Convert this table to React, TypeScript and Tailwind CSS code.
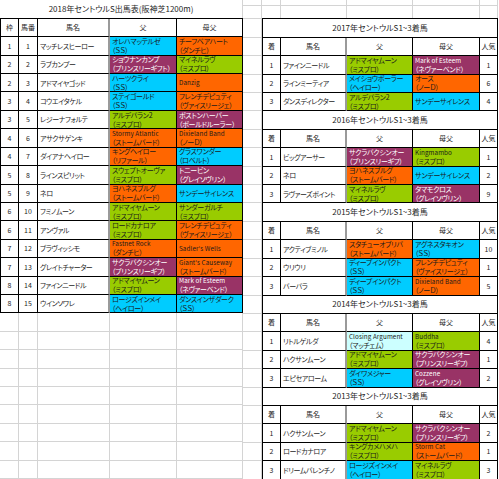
import React from "react";

type P = [string, string, string];

const COL: Record<string, string> = {
  c: "bg-[#00ccff] text-[#1a1a1a]",
  p: "bg-[#993366] text-white",
  g: "bg-[#99cc00] text-[#1a1a1a]",
  o: "bg-[#ff6600] text-[#1a1a1a]",
  l: "bg-[#ccffff] text-[#1a1a1a]",
};

const LEFT: [string, string, string, P, P][] = [
  ["1", "1", "マッチレスヒーロー", ["オレハマッテルゼ", "（ＳＳ）", "c"], ["チーフベアハート", "（ダンチヒ）", "o"]],
  ["2", "2", "ラブカンプー", ["ショウナンカンプ", "（プリンスリーギフト）", "p"], ["マイネルラヴ", "（ミスプロ）", "g"]],
  ["2", "3", "アドマイヤゴッド", ["ハーツクライ", "（ＳＳ）", "c"], ["Danzig", "", "o"]],
  ["3", "4", "コウエイタケル", ["ステイゴールド", "（ＳＳ）", "c"], ["フレンチデピュティ", "（ヴァイスリージェ）", "o"]],
  ["3", "5", "レジーナフォルテ", ["アルデバラン2", "（ミスプロ）", "g"], ["ボストンハーバー", "（ボールドルーラー）", "p"]],
  ["4", "6", "アサクサゲンキ", ["Stormy Atlantic", "（ストームバード）", "o"], ["Dixieland Band", "（ノーＤ）", "o"]],
  ["4", "7", "ダイアナヘイロー", ["キングヘイロー", "（リファール）", "o"], ["グラスワンダー", "（ロベルト）", "c"]],
  ["5", "8", "ラインスピリット", ["スウェプトオーヴァ", "（ミスプロ）", "g"], ["トニービン", "（グレイソヴリン）", "p"]],
  ["5", "9", "ネロ", ["ヨハネスブルグ", "（ストームバード）", "o"], ["サンデーサイレンス", "", "c"]],
  ["6", "10", "フミノムーン", ["アドマイヤムーン", "（ミスプロ）", "g"], ["サンダーガルチ", "（ミスプロ）", "g"]],
  ["6", "11", "アンヴァル", ["ロードカナロア", "（ミスプロ）", "g"], ["フレンチデピュティ", "（ヴァイスリージェ）", "o"]],
  ["7", "12", "ブラヴィッシモ", ["Fastnet Rock", "（ダンチヒ）", "o"], ["Sadler's Wells", "", "o"]],
  ["7", "13", "グレイトチャーター", ["サクラバクシンオー", "（プリンスリーギフ）", "p"], ["Giant's Causeway", "（ストームバード）", "o"]],
  ["8", "14", "ファインニードル", ["アドマイヤムーン", "（ミスプロ）", "g"], ["Mark of Esteem", "（ネヴァーベンド）", "p"]],
  ["8", "15", "ウインソワレ", ["ロージズインメイ", "（ヘイロー）", "c"], ["ダンスインザダーク", "（ＳＳ）", "c"]],
];

type RRow = [string, string, P, P, string];
const RIGHT: [string, RRow[]][] = [
  ["2017年セントウルS1~3着馬", [
    ["1", "ファインニードル", ["アドマイヤムーン", "（ミスプロ）", "g"], ["Mark of Esteem", "（ネヴァーベンド）", "p"], "1"],
    ["2", "ラインミーティア", ["メイショウボーラー", "（ヘイロー）", "c"], ["オース", "（ノーＤ）", "o"], "6"],
    ["3", "ダンスディレクター", ["アルデバラン2", "（ミスプロ）", "g"], ["サンデーサイレンス", "", "c"], "4"],
  ]],
  ["2016年セントウルS1~3着馬", [
    ["1", "ビッグアーサー", ["サクラバクシンオー", "（プリンスリーギフ）", "p"], ["Kingmambo", "（ミスプロ）", "g"], "1"],
    ["2", "ネロ", ["ヨハネスブルグ", "（ストームバード）", "o"], ["サンデーサイレンス", "", "c"], "2"],
    ["3", "ラヴァーズポイント", ["マイネルラヴ", "（ミスプロ）", "g"], ["タマモクロス", "（グレイソヴリン）", "p"], "9"],
  ]],
  ["2015年セントウルS1~3着馬", [
    ["1", "アクティブミノル", ["スタチューオブリバ", "（ストームバード）", "o"], ["アグネスタキオン", "（ＳＳ）", "c"], "10"],
    ["2", "ウリウリ", ["ディープインパクト", "（ＳＳ）", "c"], ["フレンチデピュティ", "（ヴァイスリージェ）", "o"], "1"],
    ["3", "バーバラ", ["ディープインパクト", "（ＳＳ）", "c"], ["Dixieland Band", "（ノーＤ）", "o"], "5"],
  ]],
  ["2014年セントウルS1~3着馬", [
    ["1", "リトルゲルダ", ["Closing Argument", "（マッチェム）", "l"], ["Buddha", "（ミスプロ）", "g"], "4"],
    ["2", "ハクサンムーン", ["アドマイヤムーン", "（ミスプロ）", "g"], ["サクラバクシンオー", "（プリンスリーギフ）", "p"], "1"],
    ["3", "エピセアローム", ["ダイワメジャー", "（ＳＳ）", "c"], ["Cozzene", "（グレイソヴリン）", "p"], "2"],
  ]],
  ["2013年セントウルS1~3着馬", [
    ["1", "ハクサンムーン", ["アドマイヤムーン", "（ミスプロ）", "g"], ["サクラバクシンオー", "（プリンスリーギフ）", "p"], "2"],
    ["2", "ロードカナロア", ["キングカメハメハ", "（ミスプロ）", "g"], ["Storm Cat", "（ストームバード）", "o"], "1"],
    ["3", "ドリームバレンチノ", ["ロージズインメイ", "（ヘイロー）", "c"], ["マイネルラヴ", "（ミスプロ）", "g"], "3"],
  ]],
];

function Ped({ v }: { v: P }) {
  const [n, s, k] = v;
  const latin = /^[A-Za-z]/.test(n);
  return (
    <div
      className={`h-[18.42px] border-r border-b border-black overflow-hidden whitespace-nowrap pl-[2px] flex flex-col justify-center leading-[9px] ${COL[k]}`}
    >
      <span className={latin ? "text-[6.3px] tracking-[0.1px]" : "text-[7px] tracking-[-0.3px]"}>{n}</span>
      {s && <span className="text-[7px] tracking-[-0.3px]">{s}</span>}
    </div>
  );
}

function Cell({ children, className = "" }: { children?: React.ReactNode; className?: string }) {
  return (
    <div
      className={`h-[18.42px] border-r border-b border-black overflow-hidden whitespace-nowrap flex items-center text-[7px] ${className}`}
    >
      {children}
    </div>
  );
}

export default function App() {
  return (
    <div className="w-[499px] h-[479px] overflow-hidden bg-white flex text-[#262626] font-['Noto_Sans_CJK_JP','Noto_Sans',sans-serif] [font-feature-settings:'palt']">
      {/* left sheet */}
      <div className="w-[243px] shrink-0 flex flex-col">
        <div className="h-[18.42px] border-r border-[#d4d4d4] flex items-center justify-center text-[8px]">
          2018年セントウルS出馬表(阪神芝1200m)
        </div>
        <div className="border-l border-t border-black">
          <div className="grid grid-cols-[18px_19px_72px_67px_66px]">
            <Cell className="justify-center">枠</Cell>
            <Cell className="justify-center">馬番</Cell>
            <Cell className="justify-center border-r-2 border-r-[#9a9a9a]">馬名</Cell>
            <Cell className="justify-center">父</Cell>
            <Cell className="justify-center">母父</Cell>
          </div>
          {LEFT.map((r, i) => (
            <div key={i} className="grid grid-cols-[18px_19px_72px_67px_66px]">
              <Cell className="justify-center">{r[0]}</Cell>
              <Cell className="justify-center">{r[1]}</Cell>
              <Cell className="pl-[2px] tracking-[-0.4px] border-r-2 border-r-[#9a9a9a]">{r[2]}</Cell>
              <Ped v={r[3]} />
              <Ped v={r[4]} />
            </div>
          ))}
        </div>
        {Array.from({ length: 9 }).map((_, i) => (
          <div key={i} className="grid grid-cols-[19px_19px_72px_67px_66px]">
            {Array.from({ length: 5 }).map((_, j) => (
              <div key={j} className="h-[18.42px] border-r border-b border-[#d4d4d4]" />
            ))}
          </div>
        ))}
      </div>

      {/* gap column */}
      <div className="w-[19px] shrink-0 flex flex-col">
        <div className="h-[6px] border-r border-b border-[#d4d4d4]" />
        <div className="h-[12.42px] border-r border-[#d4d4d4]" />
        {Array.from({ length: 25 }).map((_, i) => (
          <div key={i} className="h-[18.42px] border-r border-t border-[#d4d4d4]" />
        ))}
      </div>

      {/* right sheet */}
      <div className="w-[236px] shrink-0 flex flex-col">
        <div className="grid grid-cols-[19px_66px_66px_67px_18px]">
          {Array.from({ length: 5 }).map((_, j) => (
            <div key={j} className="h-[6px] border-r border-b border-[#d4d4d4]" />
          ))}
          {Array.from({ length: 5 }).map((_, j) => (
            <div key={"b" + j} className="h-[12.42px] border-r border-[#d4d4d4]" />
          ))}
        </div>
        <div className="border-l border-t border-black">
          {RIGHT.map(([title, rows], si) => (
            <div key={si}>
              <div className="h-[18.42px] border-r border-b border-black flex items-center justify-center text-[8px]">
                {title}
              </div>
              <div className="grid grid-cols-[18px_66px_66px_67px_18px]">
                <Cell className="justify-center">着</Cell>
                <Cell className="justify-center border-r-2 border-r-[#9a9a9a]">馬名</Cell>
                <Cell className="justify-center">父</Cell>
                <Cell className="justify-center">母父</Cell>
                <Cell className="justify-center">人気</Cell>
              </div>
              {rows.map((r, i) => (
                <div key={i} className="grid grid-cols-[18px_66px_66px_67px_18px]">
                  <Cell className="justify-center">{r[0]}</Cell>
                  <Cell className="pl-[2px] tracking-[-0.4px] border-r-2 border-r-[#9a9a9a]">{r[1]}</Cell>
                  <Ped v={r[2]} />
                  <Ped v={r[3]} />
                  <Cell className="justify-center">{r[4]}</Cell>
                </div>
              ))}
            </div>
          ))}
        </div>
      </div>
    </div>
  );
}
